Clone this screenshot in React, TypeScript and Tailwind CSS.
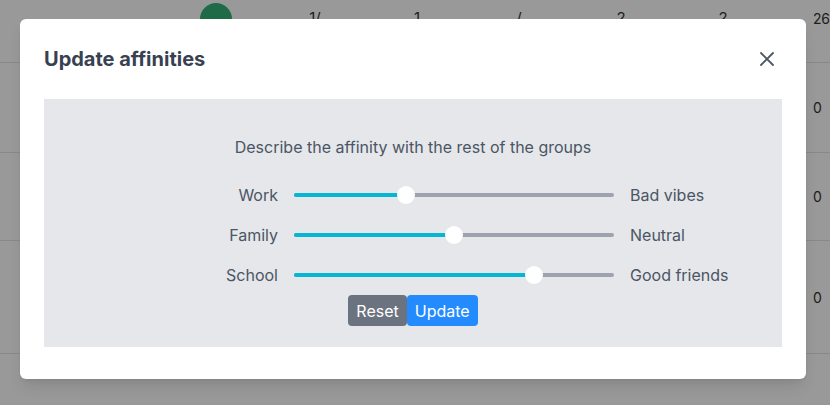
import { useState } from 'react';

interface Affinity {
  grupo: string;
  valor: number;
  rotulo: string;
}

const inicial: Affinity[] = [
  { grupo: 'Work', valor: 35, rotulo: 'Bad vibes' },
  { grupo: 'Family', valor: 50, rotulo: 'Neutral' },
  { grupo: 'School', valor: 75, rotulo: 'Good friends' },
];

// linhas da tabela que ficam por trás do modal
const linhas = [
  { h: 'h-[88px]', cols: ['1/', '1', '/', '2', '2', '26'], top: true },
  { h: 'h-[90px]', cols: ['', '', '', '', '', '0'] },
  { h: 'h-[88px]', cols: ['', '', '', '', '', '0'] },
  { h: 'h-[113px]', cols: ['', '', '', '', '', '0'] },
  { h: 'h-[60px]', cols: ['', '', '', '', '', ''] },
];

const Slider = ({ value }: { value: number }) => (
  <div className="relative w-[320px] h-[18px] flex items-center">
    <div className="w-full h-[4px] rounded-full bg-[#9ca3af]" />
    <div
      className="absolute left-0 h-[4px] rounded-full bg-[#06b6d4]"
      style={{ width: `${value}%` }}
    />
    <div
      className="absolute w-[18px] h-[18px] rounded-full bg-white -translate-x-1/2"
      style={{ left: `${value}%` }}
    />
  </div>
);

export default function App() {
  const [afinidades] = useState<Affinity[]>(inicial);

  return (
    <div
      className="relative w-[830px] h-[405px] overflow-hidden bg-white text-[#333]"
      style={{ fontFamily: 'Inter, "Noto Sans", sans-serif' }}
    >
      {/* tabela de fundo */}
      <div className="flex flex-col -mt-[25px]">
        {linhas.map((l, i) => (
          <div key={i} className={`${l.h} flex items-center border-b border-[#e5e5e5] text-[15px]`}>
            <div className="w-[200px] shrink-0" />
            <div className="w-[64px] shrink-0">
              {l.top && <div className="w-[32px] h-[32px] rounded-full bg-[#34b278]" />}
            </div>
            {l.cols.map((c, j) => (
              <div key={j} className={j === 5 ? 'w-[56px] shrink-0 pl-[39px] text-[14px] tracking-tight' : 'w-[102px] shrink-0 text-center'}>
                {c}
              </div>
            ))}
          </div>
        ))}
      </div>

      {/* overlay */}
      <div className="absolute inset-0 bg-black/40" />

      {/* modal */}
      <div className="absolute left-[20px] top-[19px] w-[786px] bg-white rounded-md shadow-lg px-6 pt-6 pb-8">
        <div className="flex items-center justify-between mb-6 h-[32px]">
          <h2 className="text-[20px] font-bold text-[#374151]">Update affinities</h2>
          <button className="w-[32px] h-[32px] flex items-center justify-center mr-[-1px] text-[#4b5563]">
            <svg width="14" height="14" viewBox="0 0 14 14" fill="none" stroke="currentColor" strokeWidth="1.8" strokeLinecap="round">
              <path d="M1 1 L13 13 M13 1 L1 13" />
            </svg>
          </button>
        </div>

        <div className="bg-[#e5e7eb] pt-[36px] pb-[21px] text-[16px] text-[#4b5563]">
          <p className="text-center leading-6 mb-[16px]">Describe the affinity with the rest of the groups</p>

          {afinidades.map((a) => (
            <div key={a.grupo} className="flex items-center h-[40px]">
              <span className="w-[250px] text-right pr-[16px]">{a.grupo}</span>
              <Slider value={a.valor} />
              <span className="pl-[16px]">{a.rotulo}</span>
            </div>
          ))}

          <div className="flex justify-center">
            <button className="h-[31px] px-2 bg-[#6b7280] text-white rounded">Reset</button>
            <button className="h-[31px] px-2 bg-[#238bfe] text-white rounded">Update</button>
          </div>
        </div>
      </div>
    </div>
  );
}
